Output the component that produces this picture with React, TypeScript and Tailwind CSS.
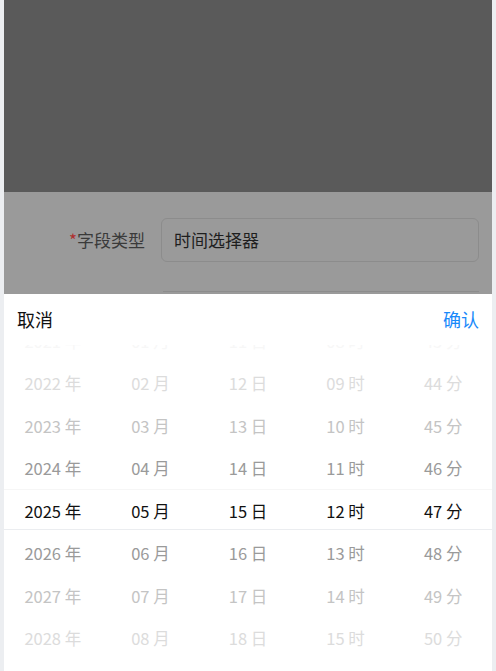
import React from 'react';

const columns: { values: string[]; unit: string }[] = [
  { values: ['2021', '2022', '2023', '2024', '2025', '2026', '2027', '2028'], unit: '年' },
  { values: ['01', '02', '03', '04', '05', '06', '07', '08'], unit: '月' },
  { values: ['11', '12', '13', '14', '15', '16', '17', '18'], unit: '日' },
  { values: ['08', '09', '10', '11', '12', '13', '14', '15'], unit: '时' },
  { values: ['43', '44', '45', '46', '47', '48', '49', '50'], unit: '分' },
];

// distance from the selected row decides how faded the text is
const tone = ['text-[#111111]', 'text-[#9a9a9a]', 'text-[#c4c4c4]', 'text-[#dcdcdc]', 'text-[#f7f7f7]'];

const App: React.FC = () => {
  return (
    <div
      className="w-[496px] h-[671px] overflow-hidden flex bg-[#eceef1] px-[4px]"
      style={{ fontFamily: '"Noto Sans CJK SC", "Noto Sans", sans-serif' }}
    >
      <div className="flex-1 flex flex-col">
        <div className="h-[192px] bg-[#5a5a5a]" />

        <div className="h-[102px] bg-[#9a9a9a] overflow-hidden">
          <div className="flex items-center mt-[26px] h-[44px]">
            <div className="w-[141px] text-right text-[17px] text-[#3a3a3a]">
              <span className="text-[#b03030]">*</span>字段类型
            </div>
            <div className="ml-[16px] w-[318px] h-[44px] rounded-[6px] border border-[#8c8c8c] flex items-center px-[12px] text-[17px] text-[#1e1e1e]">
              时间选择器
            </div>
          </div>
          <div className="ml-[159px] mt-[29px] w-[316px] h-[10px] border-t border-[#8c8c8c]" />
        </div>

        <div className="flex-1 bg-white flex flex-col overflow-hidden">
          <div className="h-[51px] flex items-center justify-between px-[13px] text-[18px] shrink-0">
            <span className="text-[#111111]">取消</span>
            <span className="text-[#1989fa]">确认</span>
          </div>

          <div className="relative flex-1 overflow-hidden">
            <div className="absolute left-0 right-0 top-[144px] h-[41px] border-t border-[#f6f6f6] border-b border-b-[#ebedf0]" />
            <div className="flex mt-[-25px]">
              {columns.map((col, ci) => (
                <div key={ci} className="flex-1 flex flex-col">
                  {col.values.map((v, ri) => {
                    const d = Math.abs(ri - 4);
                    return (
                      <div
                        key={v}
                        className={`h-[42.5px] flex items-center justify-center text-[16.5px] ${tone[d]}`}
                      >
                        {v} {col.unit}
                      </div>
                    );
                  })}
                </div>
              ))}
            </div>
          </div>
        </div>
      </div>
    </div>
  );
};

export default App;
